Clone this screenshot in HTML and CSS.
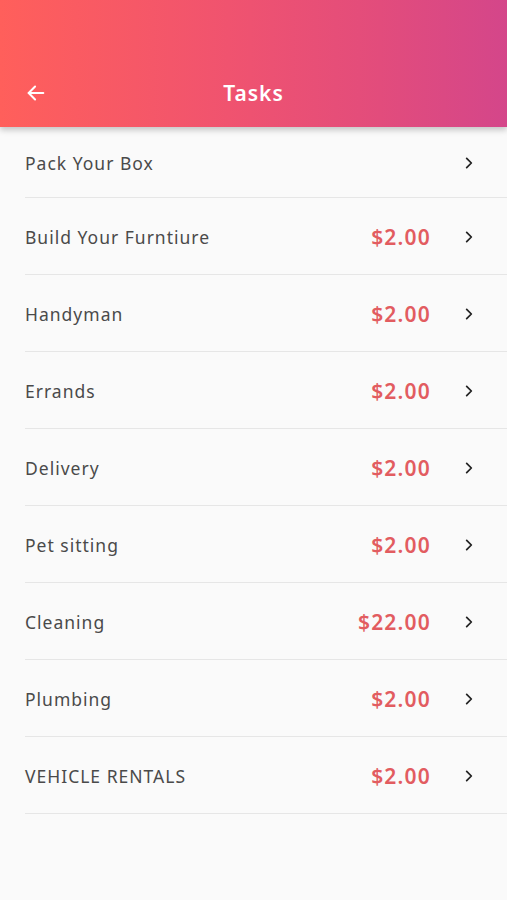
FILE: index.html
```html
<!DOCTYPE html>
<html lang="en">
<head>
    <meta charset="UTF-8">
    <meta name="viewport" content="width=device-width, initial-scale=1.0">
    <title>Tasks</title>
    <link rel="stylesheet" href="styles.css">
</head>
<body>
    <header class="app-bar">
        <button class="back-btn" aria-label="Back">
            <svg width="22" height="22" viewBox="0 0 24 24" fill="none" stroke="#ffffff" stroke-width="2.2" stroke-linecap="round" stroke-linejoin="round">
                <path d="M20 12H4"/>
                <path d="M11 5l-7 7 7 7"/>
            </svg>
        </button>
        <h1 class="title">Tasks</h1>
    </header>

    <main>
        <ul class="task-list">
            <li class="task">
                <span class="task-name">Pack Your Box</span>
                <span class="chevron">
                    <svg width="14" height="14" viewBox="0 0 24 24" fill="none" stroke="#222" stroke-width="3" stroke-linecap="round" stroke-linejoin="round"><path d="M8 4l8 8-8 8"/></svg>
                </span>
            </li>
            <li class="task has-price">
                <span class="task-name">Build Your Furntiure</span>
                <span class="price">$2.00</span>
                <span class="chevron">
                    <svg width="14" height="14" viewBox="0 0 24 24" fill="none" stroke="#222" stroke-width="3" stroke-linecap="round" stroke-linejoin="round"><path d="M8 4l8 8-8 8"/></svg>
                </span>
            </li>
            <li class="task has-price">
                <span class="task-name">Handyman</span>
                <span class="price">$2.00</span>
                <span class="chevron">
                    <svg width="14" height="14" viewBox="0 0 24 24" fill="none" stroke="#222" stroke-width="3" stroke-linecap="round" stroke-linejoin="round"><path d="M8 4l8 8-8 8"/></svg>
                </span>
            </li>
            <li class="task has-price">
                <span class="task-name">Errands</span>
                <span class="price">$2.00</span>
                <span class="chevron">
                    <svg width="14" height="14" viewBox="0 0 24 24" fill="none" stroke="#222" stroke-width="3" stroke-linecap="round" stroke-linejoin="round"><path d="M8 4l8 8-8 8"/></svg>
                </span>
            </li>
            <li class="task has-price">
                <span class="task-name">Delivery</span>
                <span class="price">$2.00</span>
                <span class="chevron">
                    <svg width="14" height="14" viewBox="0 0 24 24" fill="none" stroke="#222" stroke-width="3" stroke-linecap="round" stroke-linejoin="round"><path d="M8 4l8 8-8 8"/></svg>
                </span>
            </li>
            <li class="task has-price">
                <span class="task-name">Pet sitting</span>
                <span class="price">$2.00</span>
                <span class="chevron">
                    <svg width="14" height="14" viewBox="0 0 24 24" fill="none" stroke="#222" stroke-width="3" stroke-linecap="round" stroke-linejoin="round"><path d="M8 4l8 8-8 8"/></svg>
                </span>
            </li>
            <li class="task has-price">
                <span class="task-name">Cleaning</span>
                <span class="price">$22.00</span>
                <span class="chevron">
                    <svg width="14" height="14" viewBox="0 0 24 24" fill="none" stroke="#222" stroke-width="3" stroke-linecap="round" stroke-linejoin="round"><path d="M8 4l8 8-8 8"/></svg>
                </span>
            </li>
            <li class="task has-price">
                <span class="task-name">Plumbing</span>
                <span class="price">$2.00</span>
                <span class="chevron">
                    <svg width="14" height="14" viewBox="0 0 24 24" fill="none" stroke="#222" stroke-width="3" stroke-linecap="round" stroke-linejoin="round"><path d="M8 4l8 8-8 8"/></svg>
                </span>
            </li>
            <li class="task has-price">
                <span class="task-name">VEHICLE RENTALS</span>
                <span class="price">$2.00</span>
                <span class="chevron">
                    <svg width="14" height="14" viewBox="0 0 24 24" fill="none" stroke="#222" stroke-width="3" stroke-linecap="round" stroke-linejoin="round"><path d="M8 4l8 8-8 8"/></svg>
                </span>
            </li>
        </ul>
    </main>
</body>
</html>
```

FILE: styles.css
```css
body {
    font-family: 'Noto Sans', 'DejaVu Sans', sans-serif;
    background-color: #FAFAFA;
    color: #444444;
    margin: 0;
    padding: 0;
    min-height: 100vh;
}

.app-bar {
    height: 127px;
    box-sizing: border-box;
    padding: 0 16px 18px 16px;
    display: flex;
    align-items: flex-end;
    background: linear-gradient(90deg, #FF5F5B 0%, #F0536F 45%, #E24C7C 75%, #D4468A 100%);
    box-shadow: 0 3px 6px rgba(0, 0, 0, 0.22);
    position: relative;
    z-index: 1;
}

.back-btn {
    background: none;
    border: none;
    padding: 0;
    margin: 0 0 0 8px;
    width: 24px;
    height: 32px;
    display: flex;
    align-items: center;
    justify-content: center;
    cursor: pointer;
}

.title {
    flex: 1;
    margin: 0 32px 0 0;
    text-align: center;
    color: #FFFFFF;
    font-size: 21px;
    font-weight: 600;
    line-height: 32px;
    letter-spacing: 1px;
}

.task-list {
    list-style: none;
    margin: 0;
    padding: 0;
}

.task {
    margin-left: 25px;
    padding: 2px 31px 0 0;
    height: 68px;
    display: flex;
    align-items: center;
    border-bottom: 1.5px solid #E6E6E6;
}

.task.has-price {
    height: 74px;
}

.task-name {
    flex: 1;
    font-size: 17.5px;
    color: #4A4A4A;
    letter-spacing: 1px;
}

.price {
    font-size: 21px;
    font-weight: 600;
    color: #E25C60;
    letter-spacing: 1.2px;
    margin-right: 31px;
}

.chevron {
    display: flex;
    align-items: center;
}
```
